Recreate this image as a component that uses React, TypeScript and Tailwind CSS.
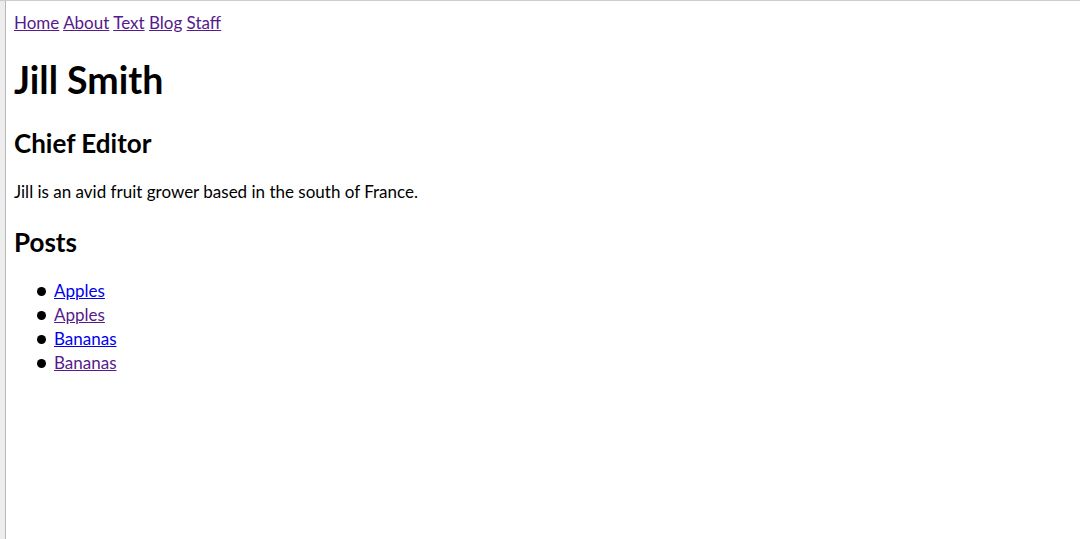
import React from 'react';

const navLinks = ['Home', 'About', 'Text', 'Blog', 'Staff'];

const posts = [
  { title: 'Apples', visited: false },
  { title: 'Apples', visited: true },
  { title: 'Bananas', visited: false },
  { title: 'Bananas', visited: true },
];

export default function App() {
  return (
    <div className="h-[539px] w-[1080px] overflow-hidden border-t border-[#cccccc] bg-white">
      <div className="flex h-full">
        <div className="w-[5px] bg-[#ededed]" />
        <div
          className="flex-1 border-l border-[#b8b8b8] px-[8px] pt-[10px] text-[17px] text-black"
          style={{ fontFamily: 'Lato, "Noto Sans", sans-serif' }}
        >
          <nav className="h-[24px] leading-[24px]">
            {navLinks.map((link, i) => (
              <React.Fragment key={link}>
                <a href="#" className="text-[#551a8b] underline">
                  {link}
                </a>
                {i < navLinks.length - 1 && ' '}
              </React.Fragment>
            ))}
          </nav>

          <h1 className="mt-[23px] text-[37.5px] font-bold leading-[44px]">Jill Smith</h1>
          <h2 className="mt-[24px] text-[26px] font-bold leading-[34px]">Chief Editor</h2>
          <p className="mt-[20px] leading-[24px]">Jill is an avid fruit grower based in the south of France.</p>
          <h2 className="mt-[21px] text-[26px] font-bold leading-[34px]">Posts</h2>

          <ul className="mt-[20px] pl-[40px] leading-[24px]">
            {posts.map((post, idx) => (
              <li key={idx} className="relative">
                <span className="absolute left-[-17px] top-[8px] h-[9px] w-[9px] rounded-full bg-black" />
                <a href="#" className={`underline ${post.visited ? 'text-[#551a8b]' : 'text-[#0000ee]'}`}>
                  {post.title}
                </a>
              </li>
            ))}
          </ul>
        </div>
      </div>
    </div>
  );
}
